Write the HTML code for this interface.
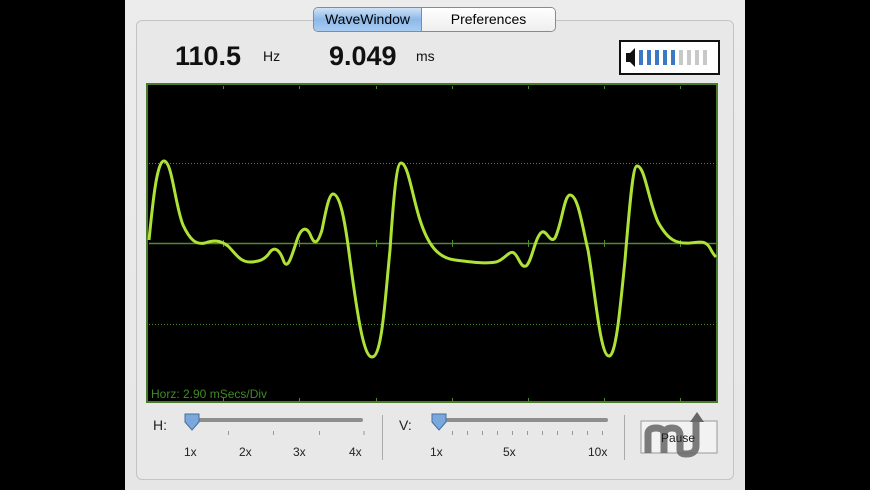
<!DOCTYPE html>
<html><head><meta charset="utf-8"><style>
body{margin:0;width:870px;height:490px;background:#000;position:relative;overflow:hidden;font-family:"Liberation Sans",sans-serif}
.win{position:absolute;left:125px;top:0;width:620px;height:490px;background:linear-gradient(#ececec,#e6e6e6)}
.panel{position:absolute;left:136px;top:20px;width:596px;height:458px;border:1px solid #c4c4c4;border-radius:6px;background:#e8e8e8}
.tabs{position:absolute;left:313px;top:7px;width:241px;height:23px;border:1px solid #8a8a8a;border-radius:5px;overflow:hidden;display:flex;font-size:14px;background:#fff}
.tabs div{line-height:23px;text-align:center}
.t1{width:107px;background:linear-gradient(#cfe2f7,#8db8e8 50%,#a9cdf2);border-right:1px solid #8a8a8a}
.t2{flex:1;background:linear-gradient(#fff,#eee)}
.big{position:absolute;top:41px;font-size:27px;font-weight:bold;color:#111}
.unit{position:absolute;top:48px;font-size:14px;color:#111}
.vol{position:absolute;left:619px;top:40px;width:97px;height:31px;border:2px solid #111;background:#fff}
.lbl{position:absolute;font-size:13px;color:#222}
</style></head><body>
<div class="win"></div>
<div class="panel"></div>
<div class="tabs"><div class="t1">WaveWindow</div><div class="t2">Preferences</div></div>
<div class="big" style="left:175px">110.5</div><div class="unit" style="left:263px">Hz</div>
<div class="big" style="left:329px">9.049</div><div class="unit" style="left:416px">ms</div>
<div class="vol">
<svg width="97" height="31" style="position:absolute;left:0;top:0">
<path d="M5 11h4l5-5v19l-5-5h-4z" fill="#111"/>
<g fill="#3d78c4"><rect x="18" y="8" width="4" height="15"/><rect x="26" y="8" width="4" height="15"/><rect x="34" y="8" width="4" height="15"/><rect x="42" y="8" width="4" height="15"/><rect x="50" y="8" width="4" height="15"/></g>
<g fill="#c8c8c8"><rect x="58" y="8" width="4" height="15"/><rect x="66" y="8" width="4" height="15"/><rect x="74" y="8" width="4" height="15"/><rect x="82" y="8" width="4" height="15"/></g>
</svg></div>
<svg style="position:absolute;left:0;top:0" width="870" height="490">
<rect x="147" y="84" width="570" height="318" fill="#000" stroke="#4a7a2c" stroke-width="2"/>
<g stroke="#4f8a2c" stroke-width="1">
<line x1="149" y1="243.5" x2="716" y2="243.5" stroke-width="1.5"/>
<line x1="149" y1="163.5" x2="716" y2="163.5" stroke-dasharray="1 2"/>
<line x1="149" y1="324.5" x2="716" y2="324.5" stroke-dasharray="1 2"/>
<path d="M223.5 86v3M299.5 86v3M376.5 86v3M452.5 86v3M528.5 86v3M604.5 86v3M680.5 86v3M223.5 398v3M299.5 398v3M376.5 398v3M452.5 398v3M528.5 398v3M604.5 398v3M680.5 398v3M376.5 240v7M528.5 240v7M223.5 240v7M299.5 240v7M452.5 240v7M604.5 240v7M680.5 240v7"/>
</g>
<path d="M149 240 C153 200 157 161 164 161 C172 161 175 205 183 225 C190 240 196 245 205 243 C214 240 220 240 228 246 C236 254 240 262 250 262 C258 262 265 260 270 252 C275 246 280 250 284 262 C288 270 292 255 297 240 C301 228 306 226 310 234 C314 244 317 246 322 230 C326 210 329 194 333 194 C340 194 345 220 350 260 C358 320 364 357 372 357 C382 357 385 300 390 250 C394 190 397 163 401 163 C408 163 412 195 420 220 C428 245 438 258 455 260 C470 262 485 264 496 262 C505 260 510 248 515 254 C519 258 521 268 526 266 C532 262 535 236 542 232 C547 230 550 244 555 238 C562 224 564 195 570 195 C578 195 582 225 588 250 C595 290 600 356 609 356 C616 356 620 310 625 260 C630 200 633 166 637 166 C645 166 648 200 658 222 C668 240 676 244 690 243 C700 242 705 240 710 248 C712 252 714 255 716 257" fill="none" stroke="#aee236" stroke-width="3" stroke-linejoin="round"/>
<text x="151" y="398" font-family="Liberation Sans" font-size="12" fill="#3f8a25">Horz: 2.90 mSecs/Div</text>
<rect x="185" y="418" width="178" height="4" rx="2" fill="#8e8e8e"/>
<rect x="432" y="418" width="176" height="4" rx="2" fill="#8e8e8e"/>
<path d="M185 414h14v8l-7 8l-7-8z" fill="#7aa8dc" stroke="#456f9e"/>
<path d="M432 414h14v8l-7 8l-7-8z" fill="#7aa8dc" stroke="#456f9e"/>
<g stroke="#999"><path d="M228.5 431v4M273.5 431v4M319.5 431v4M364 431v4"/>
<path d="M452.5 431v4M467.5 431v4M482.5 431v4M497.5 431v4M512.5 431v4M527.5 431v4M542.5 431v4M557.5 431v4M572.5 431v4M587.5 431v4M602.5 431v4"/></g>
<line x1="382.5" y1="415" x2="382.5" y2="460" stroke="#aaa"/>
<line x1="624.5" y1="415" x2="624.5" y2="460" stroke="#aaa"/>
<rect x="641" y="421" width="76" height="32" fill="#f2f2f2" stroke="#999"/>
<path d="M648 453 V434 q0-6 8-6 q8 0 8 6 V453 M664 436 q0-8 8-8 q8 0 8 8 V450 q0 4 6 4 q10 0 10-8 V420" fill="none" stroke="#666" stroke-width="7" opacity="0.85"/>
<path d="M697 412 l-7 10 h14z" fill="#666"/>
</svg>
<div class="lbl" style="left:153px;top:417px;font-size:14px">H:</div>
<div class="lbl" style="left:399px;top:417px;font-size:14px">V:</div>
<div class="lbl" style="left:184px;top:445px;font-size:12px">1x</div>
<div class="lbl" style="left:239px;top:445px;font-size:12px">2x</div>
<div class="lbl" style="left:293px;top:445px;font-size:12px">3x</div>
<div class="lbl" style="left:349px;top:445px;font-size:12px">4x</div>
<div class="lbl" style="left:430px;top:445px;font-size:12px">1x</div>
<div class="lbl" style="left:503px;top:445px;font-size:12px">5x</div>
<div class="lbl" style="left:588px;top:445px;font-size:12px">10x</div>
<div class="lbl" style="left:661px;top:431px;font-size:12px">Pause</div>
</body></html>
